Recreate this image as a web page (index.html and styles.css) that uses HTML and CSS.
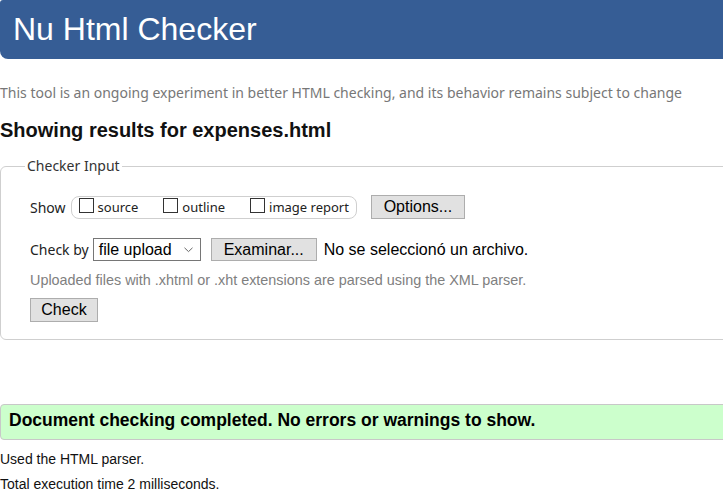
FILE: index.html
```html
<!DOCTYPE html>
<html lang="en">
<head>
<meta charset="utf-8">
<title>Nu Html Checker</title>
<link rel="stylesheet" href="styles.css">
</head>
<body>
<div class="page">
  <header class="banner"><h1 class="banner-title">Nu Html Checker</h1></header>
  <p class="subtitle">This tool is an ongoing experiment in better HTML checking, and its behavior remains subject to change</p>
  <h2 class="results">Showing results for expenses.html</h2>
  <fieldset class="checker">
    <legend class="checker-legend">Checker Input</legend>
    <div class="row row-show">
      <span class="row-label">Show</span>
      <span class="pill">
        <label class="opt"><input type="checkbox" class="box">source</label>
        <label class="opt"><input type="checkbox" class="box">outline</label>
        <label class="opt"><input type="checkbox" class="box">image report</label>
      </span>
      <button class="btn btn-options" type="button">Options...</button>
    </div>
    <div class="row row-check">
      <span class="row-label">Check by</span>
      <span class="select"><span class="select-text">file upload</span><svg class="chev" width="9" height="6" viewBox="0 0 9 6"><path d="M0.5 0.8 L4.5 4.6 L8.5 0.8" fill="none" stroke="#666" stroke-width="1"/></svg></span>
      <button class="btn btn-file" type="button">Examinar...</button>
      <span class="file-status">No se seleccionó un archivo.</span>
    </div>
    <p class="hint">Uploaded files with .xhtml or .xht extensions are parsed using the XML parser.</p>
    <button class="btn btn-check" type="submit">Check</button>
  </fieldset>
  <div class="success">Document checking completed. No errors or warnings to show.</div>
  <p class="note note-first">Used the HTML parser.</p>
  <p class="note note-second">Total execution time 2 milliseconds.</p>
</div>
</body>
</html>
```
FILE: styles.css
```css
html, body {
  margin: 0;
  padding: 0;
  background: #fff;
  overflow: hidden;
}
body {
  font-family: "Liberation Sans", Arial, sans-serif;
  color: #000;
}
.page {
  width: 760px;
}
.banner {
  background: #365d95;
  height: 59px;
  box-sizing: border-box;
  padding: 11px 0 0 13px;
  border-radius: 3px 8px 8px 8px;
}
.banner-title {
  margin: 0;
  font-family: "Liberation Sans", Arial, sans-serif;
  font-weight: normal;
  font-size: 32px;
  line-height: 36px;
  color: #fff;
}
.subtitle {
  margin: 24px 0 0;
  font-family: "Noto Sans", "Open Sans", sans-serif;
  font-size: 14px;
  line-height: 20px;
  color: #777;
}
.results {
  margin: 15px 0 0;
  font-size: 20px;
  line-height: 24px;
  font-weight: bold;
  color: #111;
}
.checker {
  margin: 14px 0 0;
  padding: 0 0 17px 29px;
  border: 1px solid #cfcfcf;
  border-radius: 6px;
  min-width: 0;
}
.checker-legend {
  margin-left: -5px;
  padding: 0 2px;
  font-family: "Noto Sans", "Open Sans", sans-serif;
  font-size: 14px;
  line-height: 20px;
  color: #333;
}
.row {
  display: flex;
  align-items: center;
}
.row-show {
  margin-top: 19px;
  height: 24px;
}
.row-check {
  margin-top: 19px;
  height: 23px;
}
.row-label {
  font-family: "Noto Sans", "Open Sans", sans-serif;
  font-size: 14px;
  color: #222;
}
.pill {
  display: flex;
  align-items: center;
  height: 23px;
  box-sizing: border-box;
  margin-left: 5px;
  padding: 0 7px 0 7px;
  border: 1px solid #cfcfcf;
  border-radius: 8px;
}
.opt {
  display: flex;
  align-items: center;
  font-family: "Noto Sans", "Open Sans", sans-serif;
  font-size: 13px;
  color: #222;
  margin-right: 25px;
}
.opt:last-child {
  margin-right: 0;
}
.box {
  appearance: none;
  -webkit-appearance: none;
  width: 15px;
  height: 15px;
  margin: -3px 4px 0 0;
  border: 1px solid #333;
  background: #fff;
  box-sizing: border-box;
}
.btn {
  font-family: "Liberation Sans", Arial, sans-serif;
  font-size: 16px;
  color: #000;
  background: #e1e1e1;
  border: 1px solid #adadad;
  border-radius: 0;
  padding: 0;
  box-sizing: border-box;
}
.btn-options {
  margin-left: 14px;
  width: 94px;
  height: 24px;
}
.select {
  display: flex;
  align-items: center;
  justify-content: space-between;
  box-sizing: border-box;
  margin-left: 4px;
  width: 108px;
  height: 23px;
  padding: 0 7px 0 5px;
  border: 1px solid #767676;
  font-size: 16px;
}
.chev {
  display: block;
}
.btn-file {
  margin-left: 10px;
  width: 106px;
  height: 23px;
}
.file-status {
  margin-left: 7px;
  font-size: 16px;
}
.hint {
  margin: 10px 0 0;
  font-size: 14.4px;
  line-height: 18px;
  color: #808080;
}
.btn-check {
  display: block;
  margin-top: 9px;
  width: 68px;
  height: 24px;
}
.success {
  margin-top: 64px;
  padding: 5px 8px 9px;
  background: #ccffcc;
  border: 1px solid #c8c8c8;
  border-radius: 4px;
  font-weight: bold;
  font-size: 17.5px;
  line-height: 20px;
}
.note {
  margin: 0;
  font-size: 14px;
  line-height: 18px;
  color: #111;
}
.note-first {
  margin-top: 10px;
}
.note-second {
  margin-top: 7px;
}
```
